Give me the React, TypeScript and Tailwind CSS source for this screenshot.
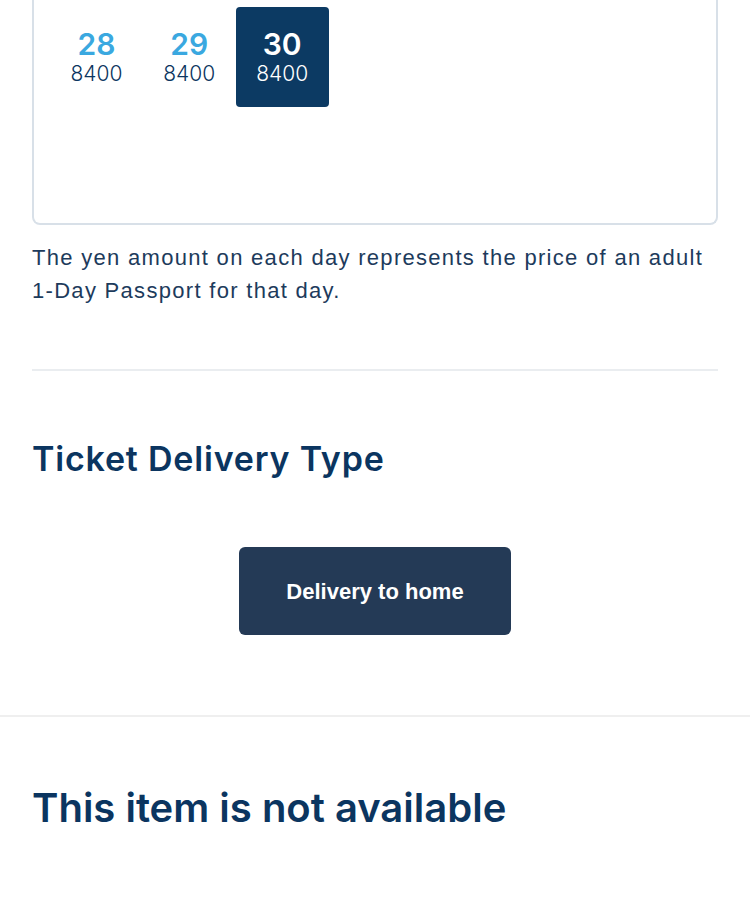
const days = [
  { d: 28, p: 8400 },
  { d: 29, p: 8400 },
  { d: 30, p: 8400, selected: true },
];

export default function App() {
  return (
    <div className="w-[750px] bg-white font-['Noto_Sans',sans-serif] text-[#0b3560]">
      <div className="px-8">
        <div className="-mt-[20px] h-[245px] rounded-b-[8px] border-2 border-t-0 border-[#d8e0e8] px-[16px] pt-[27px]">
          <div className="grid grid-cols-7">
            {days.map((x) => (
              <div
                key={x.d}
                className={
                  x.selected
                    ? "flex h-[100px] flex-col items-center justify-center rounded-[4px] bg-[#0c3a63] text-white"
                    : "flex h-[100px] flex-col items-center justify-center"
                }
              >
                <span
                  className={
                    x.selected
                      ? "font-['Inter',sans-serif] text-[30px] font-semibold leading-[34px] text-white"
                      : "font-['Inter',sans-serif] text-[30px] font-semibold leading-[34px] text-[#3aa8e0]"
                  }
                >
                  {x.d}
                </span>
                <span className="font-['Inter',sans-serif] text-[21px] font-light leading-[26px]">{x.p}</span>
              </div>
            ))}
          </div>
        </div>
        <p className="mt-[16px] font-['Liberation_Sans',sans-serif] text-[22px] leading-[33px] tracking-[1.3px] text-[#1d3b5c]">
          The yen amount on each day represents the price of an adult 1-Day Passport for that day.
        </p>
        <div className="mt-[62px] h-[2px] bg-[#eaedf0]" />
        <h2 className="mt-[66px] font-['Inter',sans-serif] text-[34px] font-semibold leading-[44px] tracking-[0.8px]">Ticket Delivery Type</h2>
        <div className="mt-[66px] flex justify-center">
          <button className="h-[88px] w-[272px] rounded-[6px] bg-[#243a56] font-['Liberation_Sans',sans-serif] text-[22px] font-bold text-white">
            Delivery to home
          </button>
        </div>
      </div>
      <div className="mt-[80px] h-[2px] bg-[#efefef]" />
      <h2 className="mt-[64px] px-8 font-['Inter',sans-serif] text-[40px] font-semibold leading-[54px]">This item is not available</h2>
      <div className="h-[60px]" />
    </div>
  );
}
